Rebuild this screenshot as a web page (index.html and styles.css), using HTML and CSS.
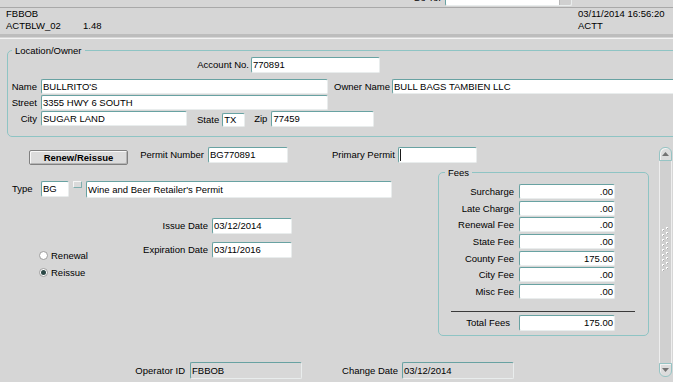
FILE: index.html
```html
<!DOCTYPE html>
<html>
<head>
<meta charset="utf-8">
<link rel="stylesheet" href="styles.css">
</head>
<body>
<div class="goto">
  <div class="goto-row">
    <span class="goto-label">Go To:</span>
    <div class="field goto-field"><span class="drop"></span></div>
  </div>
</div>
<div class="header">
  <div class="hdr-left">
    <div>FBBOB</div>
    <div><span class="hdr-form">ACTBLW_02</span>1.48</div>
  </div>
  <div class="hdr-right">
    <div>03/11/2014 16:56:20</div>
    <div>ACTT</div>
  </div>
</div>
<div class="divider"></div>
<div class="divider-light"></div>

<fieldset class="loc">
  <legend>Location/Owner</legend>
  <div class="row">
    <span class="lbl w-acct">Account No.</span>
    <div class="field f-acct">770891</div>
  </div>
  <div class="row h15 r-name">
    <span class="lbl w-name">Name</span>
    <div class="field f-wide">BULLRITO'S</div>
    <span class="lbl w-owner">Owner Name</span>
    <div class="field f-owner">BULL BAGS TAMBIEN LLC</div>
  </div>
  <div class="row h15 r-next">
    <span class="lbl w-name">Street</span>
    <div class="field f-wide">3355 HWY 6 SOUTH</div>
  </div>
  <div class="row h15 r-next">
    <span class="lbl w-name">City</span>
    <div class="field f-city">SUGAR LAND</div>
    <div class="state">
      <span class="lbl">State</span>
      <div class="field f-state">TX</div>
    </div>
    <span class="lbl l-zip">Zip</span>
    <div class="field f-zip">77459</div>
  </div>
</fieldset>

<div class="lower">
  <div class="lower-left">
    <div class="row r-permit">
      <div class="btn">Renew/Reissue</div>
      <span class="lbl l-permit">Permit Number</span>
      <div class="field f-permit">BG770891</div>
      <span class="lbl l-primary">Primary Permit</span>
      <div class="field f-primary"><span class="cursor"></span></div>
    </div>

    <div class="mid">
      <div class="left-col">
        <div class="row r-type">
          <span class="lbl l-type">Type</span>
          <div class="field f-type">BG</div>
          <div class="mini"></div>
          <div class="field f-desc">Wine and Beer Retailer's Permit</div>
        </div>
        <div class="r-dates">
          <div class="radios">
            <div class="radio-row"><span class="radio"></span>Renewal</div>
            <div class="radio-row"><span class="radio on"></span>Reissue</div>
          </div>
          <div class="dates">
            <span class="lbl">Issue Date</span>
            <div class="field">03/12/2014</div>
            <span class="lbl">Expiration Date</span>
            <div class="field">03/11/2016</div>
          </div>
        </div>
      </div>

      <fieldset class="fees">
        <legend>Fees</legend>
        <div class="fee-grid">
          <span class="lbl">Surcharge</span><div class="field num">.00</div>
          <span class="lbl">Late Charge</span><div class="field num">.00</div>
          <span class="lbl">Renewal Fee</span><div class="field num">.00</div>
          <span class="lbl">State Fee</span><div class="field num">.00</div>
          <span class="lbl">County Fee</span><div class="field num">175.00</div>
          <span class="lbl">City Fee</span><div class="field num">.00</div>
          <span class="lbl">Misc Fee</span><div class="field num">.00</div>
        </div>
        <div class="fee-line"></div>
        <div class="row r-total">
          <span class="lbl l-total">Total Fees</span>
          <div class="field num f-total">175.00</div>
        </div>
      </fieldset>
    </div>

    <div class="row r-bottom">
      <span class="lbl l-op">Operator ID</span>
      <div class="field ro f-op">FBBOB</div>
      <span class="lbl l-chg">Change Date</span>
      <div class="field ro f-chg">03/12/2014</div>
    </div>
  </div>

  <div class="scroll">
    <div class="sb-btn sb-up">
      <svg width="7" height="4" viewBox="0 0 7 4"><polygon points="0,4 7,4 3.5,0" fill="#737373"/></svg>
    </div>
    <div class="sb-track">
      <svg class="grip" width="9" height="46" viewBox="0 0 9 46">
        <g fill="#ffffff">
          <rect x="5" y="0" width="2" height="2"/><rect x="1" y="2" width="2" height="2"/>
          <rect x="5" y="5" width="2" height="2"/><rect x="1" y="7" width="2" height="2"/>
          <rect x="5" y="10" width="2" height="2"/><rect x="1" y="12" width="2" height="2"/>
          <rect x="5" y="15" width="2" height="2"/><rect x="1" y="17" width="2" height="2"/>
          <rect x="5" y="20" width="2" height="2"/><rect x="1" y="22" width="2" height="2"/>
          <rect x="5" y="25" width="2" height="2"/><rect x="1" y="27" width="2" height="2"/>
          <rect x="5" y="30" width="2" height="2"/><rect x="1" y="32" width="2" height="2"/>
          <rect x="5" y="35" width="2" height="2"/><rect x="1" y="37" width="2" height="2"/>
          <rect x="5" y="40" width="2" height="2"/><rect x="1" y="42" width="2" height="2"/>
        </g>
        <g fill="#a8a8a8">
          <rect x="6" y="1" width="1" height="1"/><rect x="2" y="3" width="1" height="1"/>
          <rect x="6" y="6" width="1" height="1"/><rect x="2" y="8" width="1" height="1"/>
          <rect x="6" y="11" width="1" height="1"/><rect x="2" y="13" width="1" height="1"/>
          <rect x="6" y="16" width="1" height="1"/><rect x="2" y="18" width="1" height="1"/>
          <rect x="6" y="21" width="1" height="1"/><rect x="2" y="23" width="1" height="1"/>
          <rect x="6" y="26" width="1" height="1"/><rect x="2" y="28" width="1" height="1"/>
          <rect x="6" y="31" width="1" height="1"/><rect x="2" y="33" width="1" height="1"/>
          <rect x="6" y="36" width="1" height="1"/><rect x="2" y="38" width="1" height="1"/>
          <rect x="6" y="41" width="1" height="1"/><rect x="2" y="43" width="1" height="1"/>
        </g>
      </svg>
    </div>
    <div class="sb-btn sb-down">
      <svg width="7" height="4" viewBox="0 0 7 4"><polygon points="0,0 7,0 3.5,4" fill="#737373"/></svg>
    </div>
  </div>
</div>
</body>
</html>
```

FILE: styles.css
```css
* { box-sizing: border-box; }
html, body { margin: 0; padding: 0; }
body {
  width: 673px;
  height: 382px;
  overflow: hidden;
  background: #d6d6d6;
  font-family: "Liberation Sans", Arial, sans-serif;
  font-size: 9.5px;
  line-height: 12px;
  color: #000;
}

/* generic */
.row { display: flex; align-items: flex-start; }
.lbl { line-height: 16px; white-space: nowrap; }
.h15 .lbl { line-height: 15px; }
.field {
  height: 16px;
  line-height: 14px;
  background: #fff;
  border: 1px solid;
  border-color: #68a2a2 #e9eded #e9eded #68a2a2;
  border-radius: 2px;
  padding: 0 1px;
  white-space: nowrap;
  overflow: hidden;
}
.h15 .field { height: 15px; line-height: 13px; }
.field.num { text-align: right; }
.field.ro { background: #d8d8d8; }

/* go to strip */
.goto {
  height: 8px;
  overflow: hidden;
  border-bottom: 1px solid #a9a9a9;
}
.goto-row {
  display: flex;
  align-items: center;
  height: 16px;
  margin-top: -10px;
  padding-left: 413px;
}
.goto-field {
  width: 127px;
  margin-left: 4px;
  display: flex;
  justify-content: flex-end;
  padding: 0;
}
.drop {
  width: 12px;
  height: 100%;
  background: #d0d0d0;
  border-left: 1px solid #b8b8b8;
}

/* header */
.header {
  display: flex;
  height: 26px;
  padding-left: 6px;
}
.hdr-left { width: 572px; }
.hdr-form { display: inline-block; width: 77px; }
.divider { height: 3px; background: #bdbdbd; }
.divider-light { height: 1px; margin-top: 1px; background: #f4f4f4; }

/* fieldsets */
fieldset {
  margin: 0;
  padding: 0;
  border: 1px solid #8ec4c4;
  border-radius: 5px;
  min-width: 0;
}
legend {
  padding: 0 3px;
  line-height: 13px;
}
.loc {
  margin: 5px 0 0 7px;
  width: 720px;
  padding-bottom: 9px;
}
.loc legend { margin-left: 4px; }

.w-acct { width: 241px; text-align: right; margin-right: 2px; }
.f-acct { width: 129px; }
.r-name { margin-top: 6px; }
.r-next { margin-top: 1px; }
.w-name { width: 29px; text-align: right; margin-right: 4px; }
.f-wide { width: 287px; }
.w-owner { width: 57px; margin-left: 5px; text-align: right; margin-right: 2px; }
.f-owner { width: 320px; }
.f-city { width: 146px; }
.state { display: flex; margin-left: 10px; margin-top: 2px; }
.state .lbl { line-height: 14px; margin-right: 3px; }
.h15 .state .field { height: 14px; line-height: 12px; width: 23px; }
.l-zip { margin-left: 9px; margin-right: 4px; }
.h15 .f-zip { width: 103px; height: 16px; line-height: 14px; }

/* lower area */
.lower { display: flex; height: 245px; }
.lower-left { width: 659px; }

.r-permit { margin-top: 10px; }
.btn {
  margin-left: 29px;
  margin-top: 3px;
  width: 99px;
  height: 15px;
  line-height: 13px;
  text-align: center;
  font-weight: bold;
  background: #dcdcdc;
  border: 1px solid #808080;
  border-radius: 2px;
  box-shadow: inset 1px 1px 0 #f8f8f8, inset -1px -1px 0 #b4b4b4;
}
.l-permit { width: 70px; margin-left: 6px; margin-right: 4px; text-align: right; }
.f-permit { width: 80px; }
.l-primary { width: 62px; margin-left: 44px; margin-right: 4px; text-align: right; }
.f-primary { width: 79px; display: flex; align-items: center; }
.cursor { width: 1px; height: 12px; background: #1a1a1a; }

.mid { display: flex; margin-top: 1px; }
.left-col { width: 438px; }

.r-type { margin-top: 15px; }
.l-type { width: 25px; margin-left: 12px; margin-right: 4px; }
.f-type { width: 28px; }
.mini {
  width: 9px;
  height: 7px;
  margin-left: 4px;
  background: #dadada;
  border: 1px solid;
  border-color: #f6f6f6 #7eaeae #7eaeae #f6f6f6;
  border-radius: 1px;
}
.f-desc { width: 306px; height: 17px; line-height: 15px; margin-left: 4px; }

.r-dates { display: flex; margin-top: 20px; }
.radios { margin-left: 39px; width: 100px; padding-top: 29px; }
.radio-row { display: flex; align-items: center; height: 17px; }
.radio {
  width: 9px;
  height: 9px;
  margin-right: 3px;
  border-radius: 50%;
  background: #fff;
  border: 1px solid #9c9c9c;
  display: flex;
  align-items: center;
  justify-content: center;
}
.radio.on::after {
  content: "";
  width: 5px;
  height: 5px;
  border-radius: 50%;
  background: #2c4846;
}
.dates {
  display: grid;
  grid-template-columns: 69px 80px;
  grid-auto-rows: 16px;
  column-gap: 4px;
  row-gap: 8px;
}
.dates .lbl { text-align: right; }

.fees {
  width: 211px;
  padding-bottom: 4px;
}
.fees legend { margin-left: 6px; }
.fee-grid {
  display: grid;
  grid-template-columns: 75px 96px;
  grid-auto-rows: 15px;
  column-gap: 5px;
  row-gap: 1.6667px;
  margin-top: 5px;
}
.fee-grid .lbl { text-align: right; line-height: 15px; }
.fee-grid .field { height: 15px; line-height: 13px; }
.fee-line {
  margin: 12px 0 0 12px;
  width: 184px;
  border-top: 1px solid #3a3a3a;
}
.r-total { margin-top: 3px; }
.l-total { width: 71px; text-align: right; margin-right: 9px; }
.f-total { width: 96px; }

.r-bottom { margin-top: 26px; }
.r-bottom .lbl { line-height: 17px; }
.r-bottom .field { height: 17px; line-height: 15px; }
.l-op { width: 51px; margin-left: 134px; margin-right: 5px; text-align: right; }
.f-op { width: 112px; }
.l-chg { width: 57px; margin-left: 39px; margin-right: 4px; text-align: right; }
.f-chg { width: 112px; }

/* scrollbar */
.scroll {
  width: 13px;
  height: 230px;
  margin-top: 10px;
  display: flex;
  flex-direction: column;
}
.sb-btn {
  height: 14px;
  background: #dcdcdc;
  border: 1px solid #96c4c4;
  display: flex;
  align-items: center;
  justify-content: center;
  box-shadow: inset 1px 1px 0 #f2f2f2;
}
.sb-up { border-radius: 6px 6px 0 0; }
.sb-down { border-radius: 0 0 6px 6px; }
.sb-track {
  flex: 1;
  background: #d0d0d0;
  border-left: 1px solid #eeeeee;
  border-right: 1px solid #eeeeee;
  display: flex;
  justify-content: center;
  align-items: flex-start;
}
.grip { margin-top: 66px; }
```
